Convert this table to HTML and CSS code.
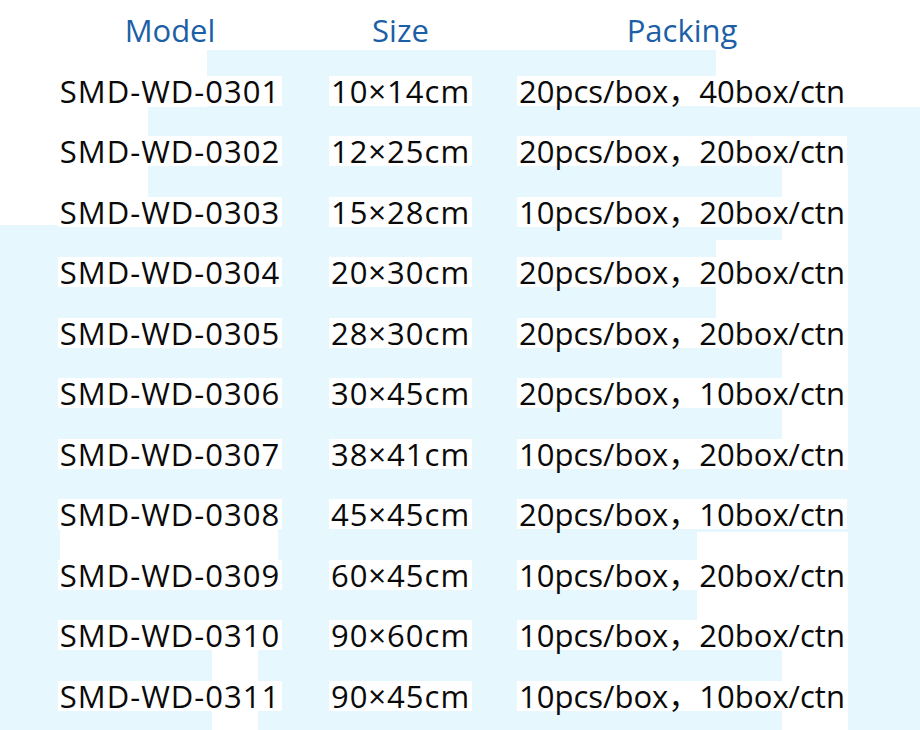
FILE: index.html
```html
<!DOCTYPE html>
<html lang="en">
<head>
<meta charset="utf-8">
<title>Model Size Packing</title>
<link rel="stylesheet" href="styles.css">
</head>
<body>
<div class="sheet">
  <div class="table">
    <div class="cell head"><span>Model</span></div>
    <div class="cell head"><span>Size</span></div>
    <div class="cell head"><span>Packing</span></div>

    <div class="cell model"><span class="hl">SMD-WD-0301</span></div>
    <div class="cell size"><span class="hl">10×14cm</span></div>
    <div class="cell pack"><span class="hl first">20pcs/box，</span><span class="hl">40box/ctn</span></div>

    <div class="cell model"><span class="hl">SMD-WD-0302</span></div>
    <div class="cell size"><span class="hl">12×25cm</span></div>
    <div class="cell pack"><span class="hl first">20pcs/box，</span><span class="hl">20box/ctn</span></div>

    <div class="cell model"><span class="hl">SMD-WD-0303</span></div>
    <div class="cell size"><span class="hl">15×28cm</span></div>
    <div class="cell pack"><span class="hl first">10pcs/box，</span><span class="hl">20box/ctn</span></div>

    <div class="cell model"><span class="hl">SMD-WD-0304</span></div>
    <div class="cell size"><span class="hl">20×30cm</span></div>
    <div class="cell pack"><span class="hl first">20pcs/box，</span><span class="hl">20box/ctn</span></div>

    <div class="cell model"><span class="hl">SMD-WD-0305</span></div>
    <div class="cell size"><span class="hl">28×30cm</span></div>
    <div class="cell pack"><span class="hl first">20pcs/box，</span><span class="hl">20box/ctn</span></div>

    <div class="cell model"><span class="hl">SMD-WD-0306</span></div>
    <div class="cell size"><span class="hl">30×45cm</span></div>
    <div class="cell pack"><span class="hl first">20pcs/box，</span><span class="hl">10box/ctn</span></div>

    <div class="cell model"><span class="hl">SMD-WD-0307</span></div>
    <div class="cell size"><span class="hl">38×41cm</span></div>
    <div class="cell pack"><span class="hl first">10pcs/box，</span><span class="hl">20box/ctn</span></div>

    <div class="cell model"><span class="hl">SMD-WD-0308</span></div>
    <div class="cell size"><span class="hl">45×45cm</span></div>
    <div class="cell pack"><span class="hl first">20pcs/box，</span><span class="hl">10box/ctn</span></div>

    <div class="cell model"><span class="hl">SMD-WD-0309</span></div>
    <div class="cell size"><span class="hl">60×45cm</span></div>
    <div class="cell pack"><span class="hl first">10pcs/box，</span><span class="hl">20box/ctn</span></div>

    <div class="cell model"><span class="hl">SMD-WD-0310</span></div>
    <div class="cell size"><span class="hl">90×60cm</span></div>
    <div class="cell pack"><span class="hl first">10pcs/box，</span><span class="hl">20box/ctn</span></div>

    <div class="cell model"><span class="hl">SMD-WD-0311</span></div>
    <div class="cell size"><span class="hl">90×45cm</span></div>
    <div class="cell pack"><span class="hl first">10pcs/box，</span><span class="hl">10box/ctn</span></div>
  </div>
</div>
</body>
</html>
```
FILE: styles.css
```css
html, body {
  margin: 0;
  padding: 0;
  background: #ffffff;
}

.sheet {
  width: 920px;
  height: 730px;
  overflow: hidden;
  background-color: #e6f8fe;
  background-image:
    linear-gradient(#fff, #fff),
    linear-gradient(#fff, #fff),
    linear-gradient(#fff, #fff),
    linear-gradient(#fff, #fff),
    linear-gradient(#fff, #fff),
    linear-gradient(#fff, #fff),
    linear-gradient(#fff, #fff),
    linear-gradient(#fff, #fff),
    linear-gradient(#fff, #fff),
    linear-gradient(#fff, #fff);
  background-repeat: no-repeat;
  background-position:
    0 0,
    0 50px,
    148px 50px,
    716px 50px,
    782px 165px,
    716px 240px,
    697px 532px,
    782px 650px,
    60px 527px,
    212px 650px;
  background-size:
    920px 50px,
    148px 175px,
    59px 57px,
    204px 57px,
    66px 305px,
    66px 105px,
    151px 118px,
    66px 80px,
    218px 35px,
    46px 80px;
  font-family: "Open Sans", "Noto Sans CJK SC", sans-serif;
  font-size: 31px;
  color: #0a0a0a;
}

.table {
  display: grid;
  grid-template-columns: 260px 201px 362px;
  grid-auto-rows: 60.5px;
  padding-left: 40px;
}

.cell {
  display: flex;
  align-items: center;
  justify-content: center;
  white-space: nowrap;
}

.cell span {
  display: inline-block;
  line-height: 30px;
  height: 30px;
}

.head {
  color: #1d5fa6;
}

.model {
  letter-spacing: 1px;
}

.size {
  letter-spacing: 1px;
}

.hl {
  background: #ffffff;
  padding: 0 2px;
}

.first {
  margin-right: -4px;
}
```
